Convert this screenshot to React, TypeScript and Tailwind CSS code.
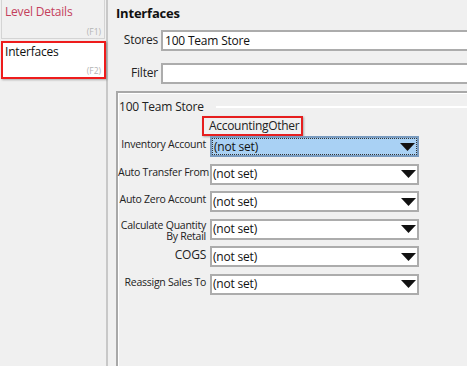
import React from "react";

const Arrow = () => (
  <svg width="15" height="8" viewBox="0 0 15 8" className="shrink-0">
    <polygon points="0,0 15,0 7.5,8" fill="#111" />
  </svg>
);

const Dropdown = ({ selected }: { selected?: boolean }) => (
  <div
    className={
      "w-[209px] h-[21px] shrink-0 border-2 flex items-center " +
      (selected ? "border-[#7a9cc0] bg-[#a9d1f4]" : "border-[#acacac] bg-white")
    }
  >
    <div
      className={
        "flex-1 h-full flex items-center justify-between pl-[1px] pr-[1px] " +
        (selected ? "border border-dotted border-[#333]" : "")
      }
    >
      <span className="text-[12px] tracking-[-0.2px] leading-none text-[#111]">(not set)</span>
      <Arrow />
    </div>
  </div>
);

const Row = ({ label, selected, two }: { label: React.ReactNode; selected?: boolean; two?: boolean }) => (
  <div className="flex items-start gap-[4px] h-[21px]">
    <div
      className={
        "w-[88px] h-[21px] shrink-0 text-right whitespace-nowrap text-[10.5px] tracking-[-0.25px] text-[#222] " +
        (two ? "leading-[11.5px] pt-[1px]" : "leading-[13px] pt-[2px]")
      }
    >
      {label}
    </div>
    <Dropdown selected={selected} />
  </div>
);

export default function App() {
  return (
    <div className="w-[467px] h-[366px] bg-[#f0f0f0] flex overflow-hidden font-['Open_Sans',sans-serif] text-[#111]">
      {/* Left navigation */}
      <div className="w-[108px] shrink-0 h-full border-r-2 border-[#c8c8c8] flex flex-col">
        <div className="relative h-[39px] ml-[1px] mr-[1px] border-l border-b border-r border-[#d4d4d4]">
          <span className="absolute left-[3px] top-[4px] text-[12px] tracking-[-0.2px] leading-[15px] text-[#c4405c]">Level Details</span>
          <span className="absolute right-[3px] bottom-[1px] text-[8.5px] leading-[10px] text-[#b4b4b4]">(F1)</span>
        </div>
        <div className="relative h-[38px] mt-[2px] ml-[1px] mr-[0px] border-2 border-[#ee1c1c] bg-white shadow-[1px_1px_2px_rgba(0,0,0,0.3)]">
          <span className="absolute left-[2px] top-[1px] text-[12px] tracking-[-0.2px] leading-[15px] text-[#111]">Interfaces</span>
          <span className="absolute right-[3px] bottom-[1px] text-[8.5px] leading-[10px] text-[#b4b4b4]">(F2)</span>
        </div>
      </div>

      {/* Right content */}
      <div className="flex-1 flex flex-col pl-[8px] min-w-0">
        <div className="mt-[5px] text-[13px] leading-[16px] font-bold tracking-[-0.2px] text-[#111]">Interfaces</div>

        <div className="mt-[9px] flex items-start">
          <div className="w-[42px] shrink-0 text-right text-[12px] tracking-[-0.2px] leading-[16px] pt-[2px] text-[#222]">Stores</div>
          <div className="ml-[3px] w-[330px] h-[21px] shrink-0 border-2 border-[#acacac] bg-white flex items-center pl-[2px]">
            <span className="text-[12px] tracking-[-0.2px] leading-none">100 Team Store</span>
          </div>
        </div>

        <div className="mt-[12px] flex items-start">
          <div className="w-[42px] shrink-0 text-right text-[12px] tracking-[-0.2px] leading-[16px] pt-[2px] text-[#222]">Filter</div>
          <div className="ml-[3px] w-[330px] h-[21px] shrink-0 border-2 border-[#acacac] bg-white" />
        </div>

        {/* Group box */}
        <div className="mt-[7px] w-[380px] flex-1 border-l-2 border-t-2 border-[#a8a8a8] shadow-[inset_1px_1px_0_#ffffff] flex flex-col">
          <div className="flex items-center mt-[6px]">
            <span className="ml-[1px] text-[12px] tracking-[-0.2px] leading-[15px] text-[#222]">100 Team Store</span>
            <div className="ml-[12px] flex-1 h-[2px] bg-white" />
          </div>

          <div className="ml-[84px] mt-[2px] w-[101px] h-[20px] border-2 border-[#e61e1e] shadow-[1px_1px_2px_rgba(0,0,0,0.3)] flex items-center pl-[5px]">
            <span className="text-[12px] tracking-[-0.3px] leading-none text-[#222]">AccountingOther</span>
          </div>

          <div className="flex flex-col gap-[6.5px]">
            <Row label="Inventory Account" selected />
            <Row label="Auto Transfer From" />
            <Row label="Auto Zero Account" />
            <Row
              two
              label={
                <>
                  Calculate Quantity
                  <br />
                  By Retail
                </>
              }
            />
            <Row label={<span className="text-[12px]">COGS</span>} />
            <Row label="Reassign Sales To" />
          </div>
        </div>
      </div>
    </div>
  );
}
